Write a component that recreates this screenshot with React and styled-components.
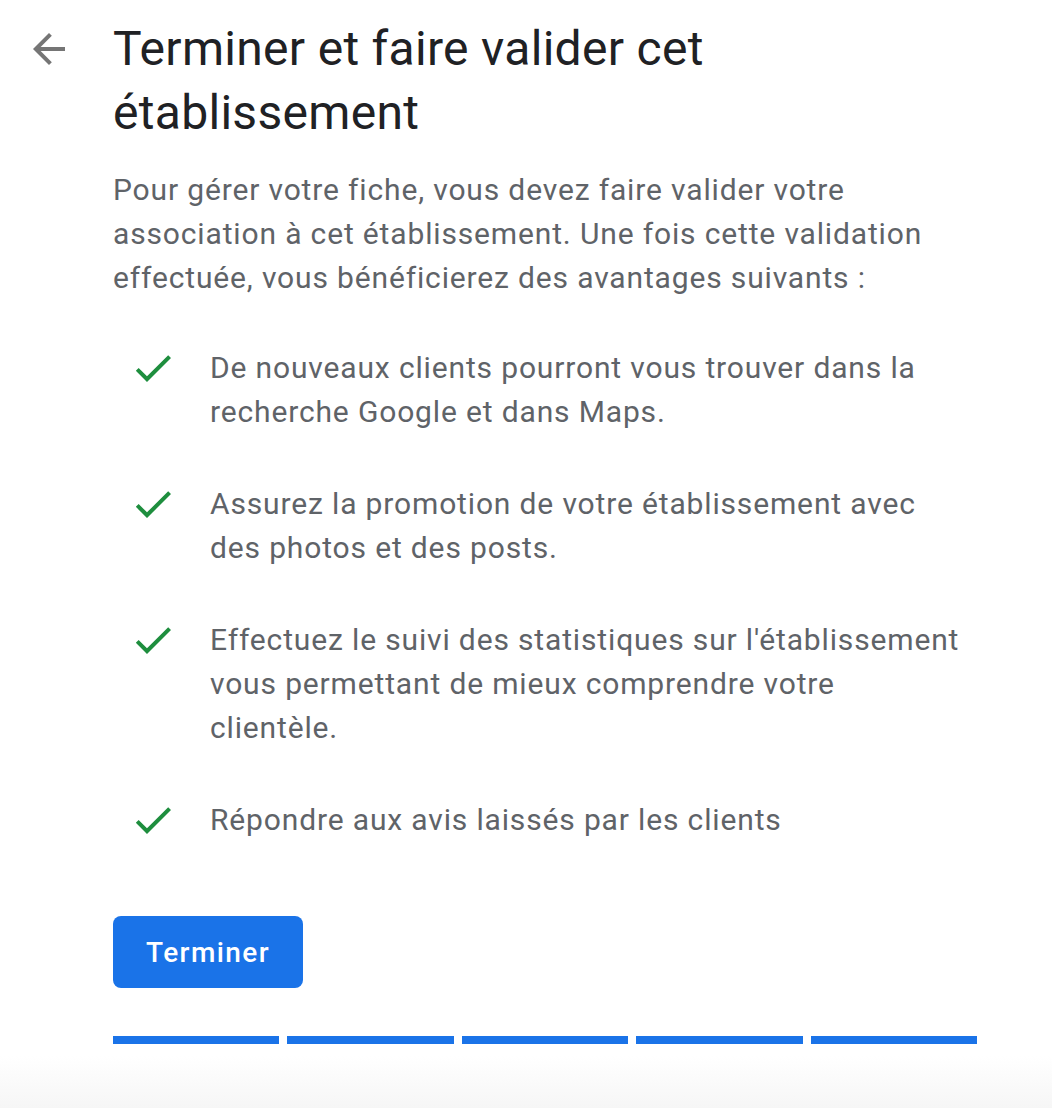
import React from "react";
import styled, { createGlobalStyle } from "styled-components";

const Global = createGlobalStyle`
  html, body { margin: 0; padding: 0; background: #fff; }
  body { font-family: Roboto, "Liberation Sans", Arial, sans-serif; }
  * { box-sizing: border-box; }
`;

const Page = styled.div`
  min-height: 1108px;
  background: linear-gradient(to bottom, #ffffff 0, #ffffff 1056px, #f6f6f6 1108px);
  display: flex;
  padding-top: 17px;
`;

const Gutter = styled.div`
  width: 113px;
  flex: 0 0 113px;
  padding-left: 25px;
  padding-top: 8px;
`;

const BackButton = styled.button`
  width: 48px;
  height: 48px;
  padding: 0;
  border: none;
  background: transparent;
  display: flex;
  align-items: center;
  justify-content: center;
  cursor: pointer;
  svg { width: 48px; height: 48px; fill: #757575; }
`;

const Content = styled.div`
  width: 864px;
  display: flex;
  flex-direction: column;
`;

const Title = styled.h1`
  margin: 0;
  font-family: Roboto, "Liberation Sans", sans-serif;
  font-weight: 400;
  font-size: 48px;
  line-height: 64px;
  letter-spacing: 0.3px;
  color: #202124;
`;

const Intro = styled.p`
  margin: 23px 0 0;
  font-size: 30px;
  line-height: 44px;
  letter-spacing: 0.85px;
  color: #5f6368;
`;

const List = styled.ul`
  list-style: none;
  margin: 46px 0 0;
  padding: 0;
  display: flex;
  flex-direction: column;
  gap: 48px;
`;

const Item = styled.li`
  display: flex;
  align-items: flex-start;
  gap: 33px;
  padding-left: 16px;
  padding-right: 12px;
`;

const CheckIcon = styled.svg`
  width: 48px;
  height: 48px;
  flex: 0 0 48px;
  margin-top: -2px;
  fill: #1e8e3e;
`;

const ItemText = styled.span`
  font-size: 30px;
  line-height: 44px;
  letter-spacing: 0.85px;
  color: #5f6368;
`;

const PrimaryButton = styled.button`
  margin-top: 72px;
  align-self: flex-start;
  width: 190px;
  height: 72px;
  border: none;
  border-radius: 8px;
  background: #1a73e8;
  color: #fff;
  font-family: Roboto, "Liberation Sans", sans-serif;
  font-weight: 500;
  font-size: 28px;
  letter-spacing: 1.4px;
  cursor: pointer;
`;

const Progress = styled.div`
  margin-top: 48px;
  display: grid;
  grid-template-columns: repeat(5, 1fr);
  gap: 8px;
`;

const Segment = styled.div`
  height: 8px;
  background: ${(p) => (p.$done ? "#1a73e8" : "#dadce0")};
`;

const Check = () => (
  <CheckIcon viewBox="0 0 24 24">
    <path d="M9 16.17L4.83 12l-1.42 1.41L9 19 21 7l-1.41-1.41z" />
  </CheckIcon>
);

const items = [
  "De nouveaux clients pourront vous trouver dans la recherche Google et dans Maps.",
  "Assurez la promotion de votre établissement avec des photos et des posts.",
  "Effectuez le suivi des statistiques sur l'établissement vous permettant de mieux comprendre votre clientèle.",
  "Répondre aux avis laissés par les clients",
];

export default function App() {
  return (
    <>
      <Global />
      <Page>
        <Gutter>
          <BackButton aria-label="Retour">
            <svg viewBox="0 0 24 24">
              <path d="M20 11H7.83l5.59-5.59L12 4l-8 8 8 8 1.41-1.41L7.83 13H20v-2z" />
            </svg>
          </BackButton>
        </Gutter>
        <Content>
          <Title>Terminer et faire valider cet établissement</Title>
          <Intro>
            Pour gérer votre fiche, vous devez faire valider votre association à cet
            établissement. Une fois cette validation effectuée, vous bénéficierez des
            avantages suivants :
          </Intro>
          <List>
            {items.map((t) => (
              <Item key={t}>
                <Check />
                <ItemText>{t}</ItemText>
              </Item>
            ))}
          </List>
          <PrimaryButton>Terminer</PrimaryButton>
          <Progress>
            {[0, 1, 2, 3, 4].map((i) => (
              <Segment key={i} $done />
            ))}
          </Progress>
        </Content>
      </Page>
    </>
  );
}
